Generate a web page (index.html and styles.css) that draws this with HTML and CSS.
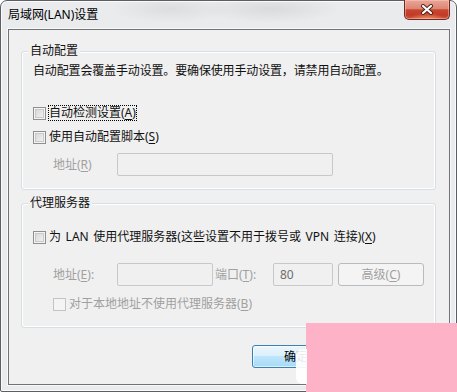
FILE: index.html
```html
<!DOCTYPE html>
<html lang="zh-CN">
<head>
	<meta charset="UTF-8">
	<title>局域网(LAN)设置</title>
	<link rel="stylesheet" href="styles.css">
</head>
<body>
	<div class="window">
		<div class="titlebar">
			<span class="title">局域网(LAN)设置</span>
			<button class="close" type="button" aria-label="关闭">
				<svg width="14" height="11" viewBox="0 0 14 11">
					<path d="M3 2 L11 9 M11 2 L3 9" stroke="#4a2018" stroke-width="4" stroke-linecap="round" fill="none"/>
					<path d="M3 2 L11 9 M11 2 L3 9" stroke="#fff" stroke-width="2.2" stroke-linecap="round" fill="none"/>
				</svg>
			</button>
		</div>

		<div class="client">
			<fieldset class="group auto">
				<legend>自动配置</legend>
				<p class="note">自动配置会覆盖手动设置。要确保使用手动设置，请禁用自动配置。</p>
				<label class="check detect"><span class="box"></span><span class="focus">自动检测设置(<u>A</u>)</span></label>
				<label class="check script"><span class="box"></span>使用自动配置脚本(<u>S</u>)</label>
				<div class="row">
					<span class="lbl off">地址(<u>R</u>)</span>
					<span class="field wide"></span>
				</div>
			</fieldset>

			<fieldset class="group proxy">
				<legend>代理服务器</legend>
				<label class="check lan"><span class="box"></span>为 LAN 使用代理服务器(这些设置不用于拨号或 VPN 连接)(<u>X</u>)</label>
				<div class="row addr">
					<span class="lbl off">地址(<u>E</u>):</span>
					<span class="field host"></span>
					<span class="lbl off port-lbl">端口(<u>T</u>):</span>
					<span class="field port">80</span>
					<button class="btn off advanced" type="button">高级(<u>C</u>)</button>
				</div>
				<label class="check off bypass"><span class="box"></span>对于本地地址不使用代理服务器(<u>B</u>)</label>
			</fieldset>

			<div class="actions">
				<button class="btn default" type="button">确定</button>
				<button class="btn" type="button">取消</button>
			</div>
		</div>

		<div class="mark"></div>
		<div class="mark-arm"></div>
	</div>
</body>
</html>
```

FILE: styles.css
```css
* {
	box-sizing: border-box;
}

html,
body {
	margin: 0;
	padding: 0;
	background: #fff;
}

body {
	font-family: "Noto Sans", "Noto Sans CJK SC", sans-serif;
	font-size: 12px;
	line-height: 16px;
	color: #111;
}

u {
	text-decoration-thickness: 1px;
	text-underline-offset: 2px;
}

.window {
	position: relative;
	width: 457px;
	height: 392px;
	display: flex;
	flex-direction: column;
	border: 1px solid #5b5f64;
	border-radius: 7px 7px 2px 2px;
	padding: 0 6px 6px 7px;
	background:
		radial-gradient(ellipse 60px 14px at 170px 8px, rgba(0, 0, 0, .06), transparent),
		radial-gradient(ellipse 70px 14px at 270px 8px, rgba(0, 0, 0, .07), transparent),
		#e9ebed;
	box-shadow: inset 0 0 0 1px rgba(255, 255, 255, .8);
}

/* title bar */

.titlebar {
	height: 28px;
	display: flex;
	justify-content: space-between;
	align-items: flex-start;
}

.title {
	padding-top: 6px;
	color: #000;
}

.close {
	width: 46px;
	height: 20px;
	margin-top: -1px;
	padding: 0;
	display: flex;
	align-items: center;
	justify-content: center;
	border: 1px solid #6e2a22;
	border-top: none;
	border-radius: 0 0 5px 5px;
	background:
		radial-gradient(ellipse 18px 6px at 50% 100%, rgba(255, 170, 120, .7), transparent),
		linear-gradient(#eaa797 0%, #dc8676 45%, #c9452f 52%, #c23a26 80%, #cf5540 100%);
	box-shadow: inset 0 0 0 1px rgba(255, 210, 200, .45);
}

/* client area */

.client {
	flex: 1;
	display: flex;
	flex-direction: column;
	align-items: flex-start;
	border: 1px solid #6f7277;
	background: #f0f0f0;
	box-shadow: 0 0 0 1px rgba(255, 255, 255, .7);
}

.group {
	width: 415px;
	min-width: 0;
	margin: 0 0 0 12px;
	padding: 0 0 13px 11px;
	border: 1px solid #d5dfe5;
	border-radius: 3px;
	box-shadow: inset 0 0 0 1px #fff;
}

.group legend {
	margin-left: -5px;
	padding: 0 2px;
	line-height: 16px;
	background: #f0f0f0;
	color: #111;
}

.auto {
	margin-top: 13px;
}

.proxy {
	margin-top: 5px;
	padding-bottom: 15px;
}

.note {
	margin: 4px 0 0;
	letter-spacing: -0.15px;
}

/* check boxes */

.check {
	display: flex;
	align-items: center;
	height: 16px;
}

.box {
	width: 13px;
	height: 13px;
	margin-right: 3px;
	border: 1px solid #8e8f8f;
	background: linear-gradient(135deg, #d2d2d2, #f7f7f7);
	box-shadow: inset 0 0 0 1px #f4f4f4, inset 0 0 0 2px #c9c9c9;
}

.focus {
	margin-left: -1px;
	padding: 0 1px;
	outline: 1px dotted #000;
	outline-offset: -1px;
}

.detect {
	margin-top: 26px;
}

.script {
	margin-top: 8px;
}

.lan {
	margin-top: 18px;
	word-spacing: 1.5px;
}

.bypass {
	margin: 10px 0 0 20px;
}

.off {
	color: #a0a0a0;
}

.check.off .box {
	border-color: #c4c4c4;
	background: #f4f4f4;
	box-shadow: none;
}

/* text fields */

.row {
	display: flex;
	align-items: center;
	margin: 8px 0 0 20px;
}

.addr {
	margin-top: 18px;
}

.lbl {
	width: 64px;
}

.port-lbl {
	width: 60px;
	padding-left: 2px;
}

.field {
	height: 23px;
	border: 1px solid #c6c9cc;
	border-radius: 2px;
	background: #f0f0f0;
	color: #6d6d6d;
	padding: 3px 0 0 6px;
}

.wide {
	width: 216px;
}

.host {
	width: 96px;
}

.port {
	width: 60px;
}

/* buttons */

.btn {
	width: 88px;
	height: 23px;
	padding: 0;
	font: inherit;
	color: #000;
	border: 1px solid #707070;
	border-radius: 3px;
	background: linear-gradient(#f2f2f2 0%, #ebebeb 50%, #dddddd 50%, #cfcfcf 100%);
	box-shadow: inset 0 0 0 1px rgba(255, 255, 255, .6);
}

.btn.off {
	color: #a0a0a0;
	border-color: #b8bcbf;
	background: #f4f4f4;
	box-shadow: none;
}

.advanced {
	width: 86px;
	margin-left: 5px;
}

.btn.default {
	border-color: #3c7fb1;
	background: linear-gradient(#eaf6fd 0%, #d9f0fc 50%, #bee6fd 50%, #a7d9f5 100%);
}

.actions {
	display: flex;
	gap: 7px;
	align-self: flex-end;
	margin: 17px 14px 0 0;
}

/* pink watermark over the corner */

.mark {
	position: absolute;
	left: 305px;
	top: 322px;
	right: -1px;
	bottom: -1px;
	background: #feb2c8;
}

.mark-arm {
	position: absolute;
	left: 295px;
	top: 348px;
	width: 11px;
	height: 35px;
	border-radius: 6px 0 0 6px;
	background: rgba(255, 255, 255, .92);
}
```
